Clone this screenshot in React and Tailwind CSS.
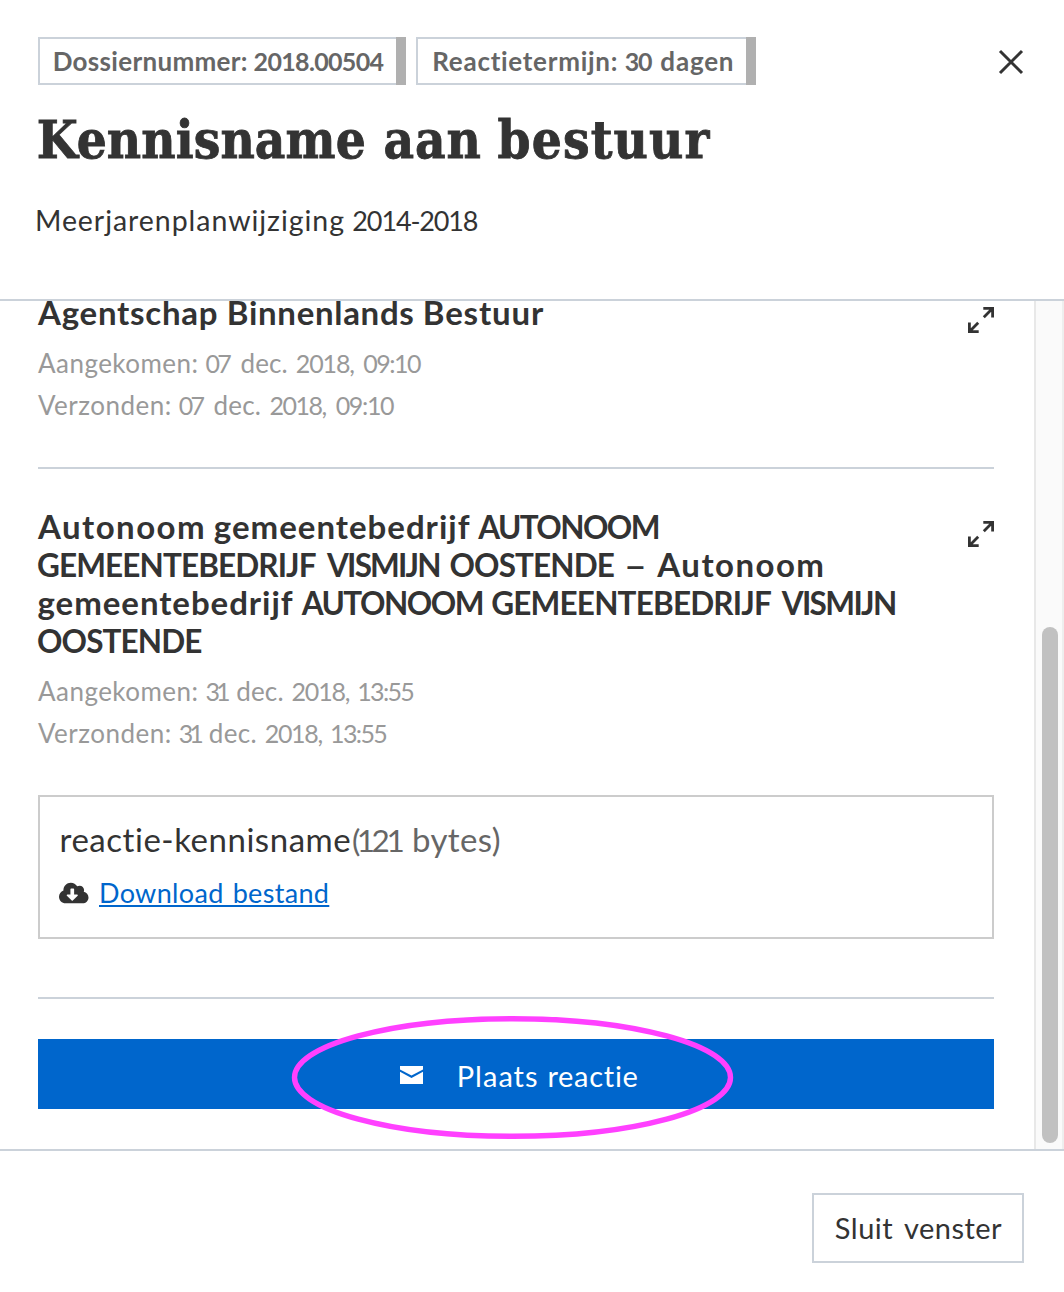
import React from 'react';
import { FaCloudDownloadAlt } from 'react-icons/fa';

// Text whose words carry their own tracking: [word, classes]
function Words({ items }) {
  return items.map(([word, cls], i) => (
    <React.Fragment key={i}>
      {i > 0 && ' '}
      <span className={cls}>{word}</span>
    </React.Fragment>
  ));
}

function Chip({ className, items }) {
  return (
    <div className="flex h-12">
      <div className={`border-2 border-r-0 border-[#cbd2da] text-[25px] leading-[44px] font-bold text-[#666] ${className}`}>
        <Words items={items} />
      </div>
      <div className="w-[10px] bg-[#b0b0b0]" />
    </div>
  );
}

function ExpandIcon() {
  return (
    <svg width="26" height="26" viewBox="0 0 26 26" fill="none" stroke="#333" strokeWidth="2.8" className="mt-[13px] shrink-0">
      <path d="M15.3 1.4H24.6V10.6M24.2 1.8L15.8 10.2" />
      <path d="M10.7 24.6H1.4V15.4M1.8 24.2L10.2 15.8" />
    </svg>
  );
}

function Message({ lines, dates, className }) {
  return (
    <article className={`flex items-start justify-between ${className}`}>
      <div>
        <h2 className="text-[31.5px] leading-[38px] font-bold text-[#333]">
          {lines.map((l, i) => (
            <div key={i}><Words items={l} /></div>
          ))}
        </h2>
        <div className="mt-[10px] text-[25px] leading-[42px] text-[#999]">
          {dates.map((d, i) => (
            <div key={i}><Words items={d} /></div>
          ))}
        </div>
      </div>
      <ExpandIcon />
    </article>
  );
}

const ARRIVED = ['Aangekomen:', 'text-[26px] leading-none tracking-[0.45px]'];
const SENT = ['Verzonden:', 'text-[26px] leading-none tracking-[0.47px]'];

export default function App() {
  return (
    <div className="flex h-[1292px] w-[1064px] flex-col overflow-hidden bg-white font-['Lato',sans-serif] whitespace-nowrap [font-variant-ligatures:none]">
      <header className="flex h-[301px] shrink-0 items-start justify-between border-b-2 border-[#cbd2da] pt-[37px] pr-10 pl-[38px]">
        <div>
          <div className="flex gap-[10px]">
            <Chip
              className="w-[358px] pl-[12.7px]"
              items={[['Dossiernummer:', 'text-[26px] leading-none tracking-[0.31px]'], ['2018.00504', 'tracking-[-0.66px] -ml-[0.3px]']]}
            />
            <Chip
              className="w-[330px] pl-[14.3px]"
              items={[['Reactietermijn:', 'text-[26px] leading-none tracking-[0.72px]'], ['30', 'tracking-[-1.2px] ml-[0.5px]'], ['dagen', 'text-[26px] leading-none tracking-[0.8px] ml-[3px]']]}
            />
          </div>
          <h1 className="mt-[25px] -ml-[1.3px] font-['DejaVu_Serif_Condensed','DejaVu_Serif',serif] text-[52.5px] leading-[60px] font-bold text-[#333] [-webkit-text-stroke:0.8px_#333]">
            <Words items={[['Kennisname', 'tracking-[0.09px]'], ['aan', 'tracking-[0.9px] ml-[1.2px]'], ['bestuur', 'tracking-[1.15px] -ml-[0.6px]']]} />
          </h1>
          <p className="mt-[31px] -ml-[3.1px] text-[27px] leading-10 text-[#333]">
            <Words items={[['Meerjarenplanwijziging', 'text-[28.5px] leading-none tracking-[0.95px]'], ['2014-2018', 'tracking-[-1.14px] ml-[0.5px]']]} />
          </p>
        </div>
        <button aria-label="Sluiten" className="mt-[12px]">
          <svg width="26" height="26" viewBox="0 0 26 26" fill="none" stroke="#333" strokeWidth="3">
            <path d="M2 2L24 24M24 2L2 24" />
          </svg>
        </button>
      </header>

      <main className="flex h-[848px] shrink-0">
        <div className="flex w-[1034px] flex-col pr-10 pl-[38px]">
          <Message
            className="-mt-[7px]"
            lines={[[['Agentschap', 'text-[33px] leading-none tracking-[0.74px]'], ['Binnenlands', 'text-[33px] leading-none tracking-[0.7px] ml-[0.9px]'], ['Bestuur', 'text-[33px] leading-none tracking-[0.84px] ml-[0.6px]']]]}
            dates={[
              [ARRIVED, ['07', 'tracking-[-2.7px] ml-[0.8px]'], ['dec.', 'text-[26px] leading-none tracking-[0.1px] ml-[4.9px]'], ['2018,', 'tracking-[-1.13px] ml-[1.7px]'], ['09:10', 'tracking-[-1.51px] ml-[3px]']],
              [SENT, ['07', 'tracking-[-2.9px] ml-[0.8px]'], ['dec.', 'text-[26px] leading-none tracking-[0.15px] ml-[5.2px]'], ['2018,', 'tracking-[-1.48px] ml-[2px]'], ['09:10', 'tracking-[-1.34px] ml-[3.5px]']],
            ]}
          />
          <hr className="mt-[41px] border-t-2 border-[#cbd2da]" />
          <Message
            className="mt-[39px]"
            lines={[
              [['Autonoom', 'text-[33px] leading-none tracking-[1.46px]'], ['gemeentebedrijf', 'text-[33px] leading-none tracking-[1px]'], ['AUTONOOM', 'tracking-[-1.57px]']],
              [['GEMEENTEBEDRIJF', 'tracking-[-0.89px] -ml-[1px]'], ['VISMIJN', 'tracking-[-1.8px] ml-[3.7px]'], ['OOSTENDE', 'tracking-[-0.88px] ml-[2px]'], ['–', 'inline-block origin-left scale-x-[1.25] ml-[2.4px]'], ['Autonoom', 'text-[33px] leading-none tracking-[1.46px] ml-[7.4px]']],
              [['gemeentebedrijf', 'text-[33px] leading-none tracking-[0.95px] -ml-[0.5px]'], ['AUTONOOM', 'tracking-[-1.5px] ml-[0.5px]'], ['GEMEENTEBEDRIJF', 'tracking-[-0.82px] ml-[0.7px]'], ['VISMIJN', 'tracking-[-1.63px] ml-[3px]']],
              [['OOSTENDE', 'tracking-[-0.88px] -ml-[1px]']],
            ]}
            dates={[
              [ARRIVED, ['31', 'tracking-[-4px] ml-[0.8px]'], ['dec.', 'text-[26px] leading-none tracking-[0.2px] ml-[3.2px]'], ['2018,', 'tracking-[-1.18px] ml-[1.3px]'], ['13:55', 'tracking-[-1.66px] ml-[1.5px]']],
              [SENT, ['31', 'tracking-[-4px] ml-[0.8px]'], ['dec.', 'text-[26px] leading-none tracking-[0.3px] ml-[2.6px]'], ['2018,', 'tracking-[-1.33px] ml-[1.5px]'], ['13:55', 'tracking-[-1.66px] ml-[1.9px]']],
            ]}
          />

          <section className="mt-[41px] h-36 border-2 border-[#ccc] pt-[23px] pl-[19px]">
            <div className="text-[31.5px] leading-10 text-[#333]">
              <span className="ml-[0.5px] text-[33px] leading-none tracking-[0.54px]">reactie-kennisname</span>
              <span className="text-[#666]">
                <span className="ml-[0.7px] tracking-[-3.5px]">(121</span> <span className="ml-[2.7px] text-[33px] leading-none tracking-[0.4px]">bytes)</span>
              </span>
            </div>
            <div className="mt-[13px] flex items-center text-[27px] leading-10">
              <FaCloudDownloadAlt className="-mt-px h-6 w-[29.5px] text-[#333]" />
              <a className="ml-[10.5px] tracking-[0.33px] text-[#0066cc] underline decoration-2 underline-offset-[2px] [text-decoration-skip-ink:none] [word-spacing:1.8px]">
                Download bestand
              </a>
            </div>
          </section>

          <hr className="mt-[58px] border-t-2 border-[#cbd2da]" />

          <div className="relative mt-10">
            <button className="flex h-[70px] w-full items-center bg-[#0066cc] pl-[362px] text-[29px] text-white">
              <svg width="23" height="18" viewBox="0 0 23 18" fill="currentColor" className="mt-[2px]">
                <path d="M0 0H23V3.4L11.5 9.5L0 3.4Z" />
                <path d="M0 5.8L11.5 11.9L23 5.8V18H0Z" />
              </svg>
              <span className="mt-1 ml-[33.8px]">
                <Words items={[['Plaats', 'tracking-[1px]'], ['reactie', 'tracking-[0.72px] ml-[1.4px]']]} />
              </span>
            </button>
            <svg className="pointer-events-none absolute top-[-24px] left-[253px]" width="443" height="125" viewBox="0 0 443 125" fill="none">
              <ellipse cx="221.5" cy="62.5" rx="218" ry="58.8" stroke="#ff40ff" strokeWidth="5.4" />
            </svg>
          </div>
        </div>

        <div className="flex w-[30px] border-x-2 border-r-[#eeeeee] border-l-[#e8e8e8] bg-[#fafafa] pt-[326px] pl-[6px]">
          <div className="h-[516px] w-4 rounded-full bg-[#c1c1c1]" />
        </div>
      </main>

      <footer className="flex flex-1 items-start justify-end border-t-2 border-[#cbd2da] pt-[42px] pr-10">
        <button className="h-[70px] w-[212px] border-2 border-[#cbd2da] pl-[20.8px] text-left text-[29px] leading-[66px] text-[#333]">
          <Words items={[['Sluit', 'tracking-[0.51px]'], ['venster', 'tracking-[0.44px] ml-[3.4px]']]} />
        </button>
      </footer>
    </div>
  );
}
